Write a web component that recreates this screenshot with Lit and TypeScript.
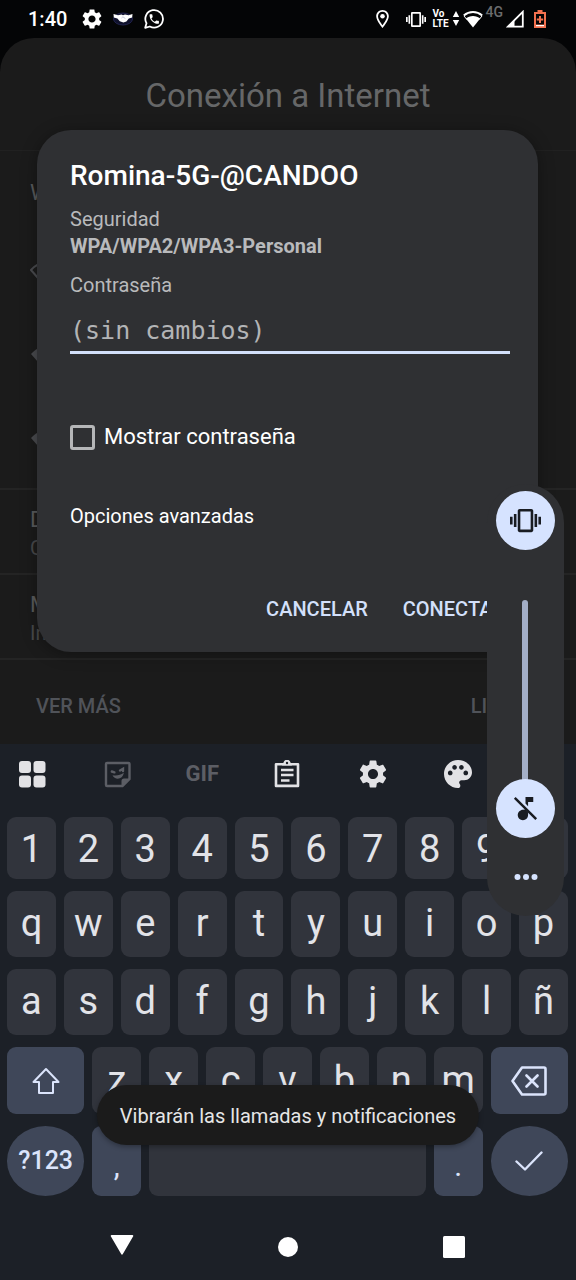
import { LitElement, html, css, svg } from "lit";
import { customElement, state } from "lit/decorators.js";
import { classMap } from "lit/directives/class-map.js";

const GEAR =
  "M19.14 12.94c.04-.3.06-.61.06-.94 0-.32-.02-.64-.07-.94l2.03-1.58c.18-.14.23-.41.12-.61l-1.92-3.32c-.12-.22-.37-.29-.59-.22l-2.39.96c-.5-.38-1.03-.7-1.62-.94l-.36-2.54c-.04-.24-.24-.41-.48-.41h-3.84c-.24 0-.43.17-.47.41l-.36 2.54c-.59.24-1.13.57-1.62.94l-2.39-.96c-.22-.08-.47 0-.59.22L2.74 8.87c-.12.21-.08.47.12.61l2.03 1.58c-.05.3-.09.63-.09.94s.02.64.07.94l-2.03 1.58c-.18.14-.23.41-.12.61l1.92 3.32c.12.22.37.29.59.22l2.39-.96c.5.38 1.03.7 1.62.94l.36 2.54c.05.24.24.41.48.41h3.84c.24 0 .44-.17.47-.41l.36-2.54c.59-.24 1.13-.56 1.62-.94l2.39.96c.22.08.47 0 .59-.22l1.92-3.32c.12-.22.07-.47-.12-.61l-2.01-1.58zM12 15.6c-1.98 0-3.6-1.62-3.6-3.6s1.62-3.6 3.6-3.6 3.6 1.62 3.6 3.6-1.62 3.6-3.6 3.6z";
const VIBRATE =
  "M0 15h2V9H0v6zm3 2h2V7H3v10zm19-8v6h2V9h-2zm-3 8h2V7h-2v10zM16.5 3h-9C6.67 3 6 3.67 6 4.5v15c0 .83.67 1.5 1.5 1.5h9c.83 0 1.5-.67 1.5-1.5v-15c0-.83-.67-1.5-1.5-1.5zM16 19H8V5h8v14z";
const CALL =
  "M6.62 10.79c1.44 2.83 3.76 5.14 6.59 6.59l2.2-2.2c.27-.27.67-.36 1.02-.24 1.12.37 2.33.57 3.57.57.55 0 1 .45 1 1V20c0 .55-.45 1-1 1-9.39 0-17-7.61-17-17 0-.55.45-1 1-1h3.5c.55 0 1 .45 1 1 0 1.25.2 2.45.57 3.57.11.35.03.74-.25 1.02l-2.2 2.2z";

const icon = (box: string, w: number, h: number, body: unknown) =>
  html`<svg viewBox=${box} width=${w} height=${h} fill="currentColor" aria-hidden="true">${body}</svg>`;

const stroke = (box: string, w: number, h: number, width: number, d: string) =>
  icon(box, w, h, svg`<path d=${d} fill="none" stroke="currentColor" stroke-width=${width} stroke-linejoin="round" stroke-linecap="round"/>`);

const reset = css`
  * { box-sizing: border-box; }
  svg { display: block; flex: none; }
  button {
    margin: 0; padding: 0; border: 0; background: none;
    font: inherit; color: inherit; cursor: pointer;
  }
`;

@customElement("status-bar")
class StatusBar extends LitElement {
  static styles = [reset, css`
    :host {
      display: flex; align-items: center; justify-content: space-between;
      height: 38px; padding: 0 30px 0 28px; color: #fff; background: #040506;
    }
    .group { display: flex; align-items: center; height: 38px; }
    .left { gap: 11px; }
    .right { gap: 3px; }
    .time { font-size: 20px; font-weight: 500; line-height: 24px; margin-right: 4px; }
    .spaced { margin-right: 14px; }
    .near { margin-right: 4px; }
    .volte { font-size: 10px; line-height: 10px; font-weight: 700; width: 16px; }
    .volte span { display: block; }
    .net { font-size: 14px; line-height: 16px; color: #6b6c6d; font-weight: 500; align-self: flex-start; padding-top: 4px; }
    .signal { margin-right: 7px; }
    .battery { color: #f3714f; }
  `];
  render() {
    return html`
      <div class="group left">
        <span class="time">1:40</span>
        ${icon("2 2 20 20", 20, 20, svg`<path d=${GEAR}/>`)}
        ${icon("0 0 20 20", 20, 20, svg`
          <ellipse cx="10" cy="10" rx="9.5" ry="6" fill="#10122c" stroke="#272a5c" stroke-width=".8"/>
          <path d="M.5 5 5 6.2 8.500 5.400 10 6.200 12 5.400 15.500 6.200 19.500 5 19.200 8.600 15.800 9.600 13.400 12.400 10.400 13.600 6.800 12.200 4.400 9.600.800 8.600Z"/>
          <path d="M8.500 9l1.400-1.200 2.500 1.800" fill="none" stroke="#a9abc6" stroke-width=".7"/>`)}
        ${icon("0 0 20 20", 20, 20, svg`
          <path d="M1.200 18.800 2.500 14.200A8.800 8.800 0 1 1 5.800 17.500Z" fill="none" stroke="currentColor" stroke-width="1.800" stroke-linejoin="round"/>
          <path d=${CALL} transform="translate(4 3.800) scale(.52)"/>`)}
      </div>
      <div class="group right">
        <span class="spaced">${icon("5 2 14 20", 13, 18, svg`
          <path d="M12 2C8.13 2 5 5.13 5 9c0 5.25 7 13 7 13s7-7.75 7-13c0-3.87-3.13-7-7-7zM7 9c0-2.76 2.24-5 5-5s5 2.24 5 5c0 2.88-2.88 7.19-5 9.88C9.92 16.21 7 11.85 7 9z"/>
          <circle cx="12" cy="9" r="2.5"/>`)}</span>
        <span class="near">${icon("0 2 24 20", 20, 17, svg`<path d=${VIBRATE}/>`)}</span>
        <span class="volte"><span>Vo</span><span>LTE</span></span>
        ${icon("0 0 8 16", 8, 16, svg`<path d="M4 0 7.2 6H.8ZM4 15 .8 9H7.2Z"/>`)}
        ${icon("0 0 20 18", 20, 18, svg`
          <path d="M10 17.500 2.800 8.600C4.800 7 7.200 6.100 10 6.100s5.200.900 7.200 2.500Z"/>
          <path d="M.8 5.600C3.400 3.400 6.500 2.100 10 2.100s6.600 1.300 9.200 3.500" fill="none" stroke="currentColor" stroke-width="2"/>
          <path d="M1 6 4 9.700M19 6 16 9.700" fill="none" stroke="currentColor" stroke-width="1"/>`)}
        <span class="net">4G</span>
        <span class="signal">${icon("0 0 18 18", 18, 18, svg`
          <path d="M16.800 1.800V16.600H2Z" fill="none" stroke="currentColor" stroke-width="1.800"/>
          <path d="M8.500 10V16.600H1.800Z"/>`)}</span>
        <span class="battery">${icon("0 0 12 18", 12, 18, svg`
          <path d="M3.500 0h5v2H12v16H0V2h3.500ZM2 4v10.500h8V4ZM5 6h2v2.500h2.200v2H7V13H5v-2.500H2.800v-2H5Z" fill-rule="evenodd"/>
          <path d="M2 15h8v1.200H2Z" fill="#fff"/>`)}</span>
      </div>`;
  }
}

@customElement("internet-panel")
class InternetPanel extends LitElement {
  static styles = [reset, css`
    :host {
      display: flex; flex-direction: column; flex: 1;
      background: #1b1b1b; border-radius: 34px 34px 0 0; color: #5a5b5d;
    }
    h1 {
      margin: 0; padding: 38px 0 34px; text-align: center; color: #666768;
      font-size: 33px; line-height: 40px; font-weight: 400;
      border-bottom: 1px solid #212121;
    }
    .networks { padding: 7px 30px 8px; border-bottom: 2px solid #242424; }
    h2 { margin: 0; font-size: 22px; line-height: 28px; font-weight: 400; }
    .networks h2 { line-height: 70px; }
    .network { display: flex; height: 84px; align-items: center; padding-top: 8px; color: #4a4b4f; }
    .item { padding: 16px 30px 11px; border-bottom: 2px solid #242424; }
    .item p { margin: 0; font-size: 20px; line-height: 28px; color: #48494b; }
    .actions {
      display: flex; justify-content: space-between; align-items: center;
      flex: 1; padding: 7px 51px 0 36px; color: #505359;
      font-size: 20px; line-height: 28px; font-weight: 500;
    }
  `];
  render() {
    const fan = "M1 10C5 5.500 9.500 3 15 3s10 2.500 14 7L15 26Z";
    return html`
      <h1>Conexión a Internet</h1>
      <section class="networks">
        <h2>W</h2>
        <div class="network">${stroke("0 0 30 28", 30, 28, 2, fan)}</div>
        <div class="network">${icon("0 0 30 28", 30, 28, svg`<path d=${fan}/>`)}</div>
        <div class="network">${icon("0 0 30 28", 30, 28, svg`<path d=${fan}/>`)}</div>
      </section>
      <section class="item"><h2>D</h2><p>C</p></section>
      <section class="item"><h2>M</h2><p>In</p></section>
      <div class="actions"><button>VER MÁS</button><button>LISTO</button></div>`;
  }
}

@customElement("wifi-dialog")
class WifiDialog extends LitElement {
  @state() private shown = false;

  static styles = [reset, css`
    :host {
      display: flex; flex-direction: column; align-items: stretch;
      padding: 30px 28px 19px 33px; border-radius: 34px;
      background: #2f3033; color: #b9babc;
      box-shadow: 0 2px 16px rgba(0, 0, 0, 0.35);
      font-size: 20px; line-height: 27px;
    }
    h2 { margin: 0 0 14px; color: #fff; font-size: 28px; line-height: 32px; font-weight: 500; }
    .value { font-weight: 700; margin-bottom: 12px; }
    .password {
      width: 100%; height: 44px; margin: 11px 0 67px; padding: 0; border: 0; border-radius: 0;
      border-bottom: 3px solid #d3e0fb; outline: 0; background: none; color: #fff;
      font: 25px/40px "DejaVu Sans Mono", monospace;
    }
    .password::placeholder { color: #b3b4b6; opacity: 1; }
    .show { display: flex; align-items: center; gap: 9px; color: #fff; font-size: 22px; line-height: 32px; }
    .show input {
      appearance: none; width: 25px; height: 25px; margin: 0;
      border: 3px solid #b5b6b8; border-radius: 3px;
    }
    .show input:checked { background: #d3e0fb; }
    .advanced { align-self: flex-start; margin: 49px 0 55px; color: #fff; line-height: 28px; }
    .actions {
      display: flex; justify-content: flex-end; gap: 35px; padding-right: 5px;
      color: #d3e0fb; font-weight: 500; line-height: 48px;
    }
  `];
  render() {
    return html`
      <h2>Romina-5G-@CANDOO</h2>
      <div>Seguridad</div>
      <div class="value">WPA/WPA2/WPA3-Personal</div>
      <label for="password">Contraseña</label>
      <input id="password" class="password" type=${this.shown ? "text" : "password"} placeholder="(sin cambios)">
      <label class="show">
        <input type="checkbox" .checked=${this.shown} @change=${() => (this.shown = !this.shown)}>
        Mostrar contraseña
      </label>
      <button class="advanced">Opciones avanzadas</button>
      <div class="actions"><button>CANCELAR</button><button>CONECTAR</button></div>`;
  }
}

@customElement("volume-panel")
class VolumePanel extends LitElement {
  static styles = [reset, css`
    :host {
      display: flex; flex-direction: column; align-items: center;
      width: 77px; padding-top: 7px; border-radius: 39px; background: #2f3033; color: #d6e3ff;
    }
    .ringer {
      display: grid; place-items: center; width: 59px; height: 59px; margin-bottom: 50px;
      border-radius: 50%; background: #d6e3ff; color: #191c22;
    }
    .slider { position: relative; width: 59px; height: 238px; }
    .slider::before {
      content: ""; position: absolute; inset: 0 27px 30px 26px;
      border-radius: 3px; background: #a3aec7;
    }
    .slider input {
      appearance: none; position: relative; display: block; width: 59px; height: 238px; margin: 0;
      writing-mode: vertical-lr; direction: rtl; background: none;
    }
    .slider input::-webkit-slider-runnable-track { width: 59px; background: none; }
    .slider input::-webkit-slider-thumb {
      appearance: none; width: 59px; height: 59px; border-radius: 50%; background: #d6e3ff;
    }
    .muted { position: absolute; left: 14px; bottom: 14px; color: #191c22; pointer-events: none; }
    .more { padding: 0 12px; height: 78px; }
  `];
  render() {
    return html`
      <button class="ringer" aria-label="Vibrar">${icon("0 0 24 24", 31, 31, svg`<path d=${VIBRATE}/>`)}</button>
      <div class="slider">
        <input type="range" min="0" max="15" value="0" aria-label="Volumen">
        <span class="muted">${icon("0 0 24 24", 31, 31, svg`
          <path d="M10 13C8 13 6 14.800 6 17s1.800 4 4 4 4-1.800 4-4v-2l-2-2.200ZM14 7h4V3h-6v5.180l2 2z"/>
          <path d="M3.700 3.700 20.300 20.300" stroke="currentColor" stroke-width="1.900"/>`)}</span>
      </div>
      <button class="more" aria-label="Más">${icon("0 0 24 6", 24, 6, svg`<circle cx="3.500" cy="3" r="3"/><circle cx="12" cy="3" r="3"/><circle cx="20.500" cy="3" r="3"/>`)}</button>`;
  }
}

@customElement("soft-keyboard")
class SoftKeyboard extends LitElement {
  static styles = [reset, css`
    :host { display: block; background: #1c2027; color: #e2e3e8; }
    .tools {
      display: flex; justify-content: space-between; align-items: center;
      height: 73px; padding: 0 19px 13px 18px;
    }
    .tool { display: grid; place-items: center; width: 28px; height: 40px; color: #e2e2e5; }
    .dim { color: #5c5e65; }
    .gif { width: 34px; margin: 0 -3px; font-size: 22px; line-height: 24px; font-weight: 700; }
    .rows { display: flex; flex-direction: column; gap: 12px; padding: 0 8px 0 7px; }
    .row { display: flex; gap: 8px; height: 66px; }
    .digits { height: 62px; }
    .tall { height: 67px; }
    .bottom { height: 70px; }
    .key {
      flex: 0 0 calc((100% - 72px) / 10); display: flex; align-items: center; justify-content: center;
      border-radius: 9px; background: #31343c; font-size: 38px; line-height: 44px; padding-bottom: 2px;
    }
    .digits .key { padding: 2px 0 0; }
    .row .wide { flex: 1 1 0; background: #3f4759; color: #dbe4fb; padding-bottom: 0; }
    .row .round { border-radius: 50%; font-size: 25px; line-height: 32px; font-weight: 500; white-space: nowrap; }
    .row .space { flex-basis: calc((100% - 72px) / 2 + 32px); }
    .punct { background: #3f4759; color: #dbe4fb; font-size: 30px; padding: 10px 0 0; }
    .nav { display: grid; grid-template-columns: repeat(3, 1fr); padding: 17px 39px 0; height: 84px; color: #fff; }
    .nav button { display: grid; place-items: center; }
  `];
  private keys(chars: string) {
    return [...chars].map((c) => html`<button class="key">${c}</button>`);
  }
  private tool(label: string, body: unknown, dim = false) {
    return html`<button class=${classMap({ tool: true, dim })} aria-label=${label}>${body}</button>`;
  }
  render() {
    return html`
      <div class="tools">
        ${this.tool("Menú", icon("0 0 28 28", 28, 28, svg`
          <rect x="1" y="1" width="12" height="12" rx="3"/><rect x="15.500" y="1" width="12" height="12" rx="3"/>
          <rect x="1" y="15.500" width="12" height="12" rx="3"/><rect x="15.500" y="15.500" width="12" height="12" rx="3"/>`))}
        ${this.tool("Stickers", icon("0 0 28 28", 28, 28, svg`
          <path d="M4 3H25.500A1 1 0 0 1 26.500 4V19L19.500 26H4A1 1 0 0 1 3 25V4A1 1 0 0 1 4 3Z" fill="none" stroke="currentColor" stroke-width="2.400"/>
          <path d="M18.500 26.500V21a2.500 2.500 0 0 1 2.500-2.500H27ZM9.500 15.200c4 .800 8 0 11.300-2.400-.500 3.900-3.300 5.900-6 5.900-2.300 0-4.300-1.400-5.300-3.500Z"/>
          <path d="M8.800 11.500l2.600.800M17 10.500l3-1.700v2.200" fill="none" stroke="currentColor" stroke-width="2.400" stroke-linecap="round"/>`), true)}
        <button class="tool dim gif">GIF</button>
        ${this.tool("Portapapeles", icon("0 0 28 28", 28, 28, svg`
          <path d="M3 4.200H25V25.900H3Z" fill="none" stroke="currentColor" stroke-width="2.600" stroke-linejoin="round"/>
          <path d="M9 5.500 10.500 2.500A3.600 3.600 0 0 1 17.500 2.500L19 5.500Z"/>
          <circle cx="14" cy="3" r="1.200" fill="#1c2027"/>
          <path d="M8 10H20.500M8 15H20.500M8 20.500H16.500" fill="none" stroke="currentColor" stroke-width="2.600"/>`))}
        ${this.tool("Ajustes", icon("2 2 20 20", 28, 28, svg`<path d=${GEAR}/>`))}
        ${this.tool("Temas", icon("3 3 18 18", 28, 28, svg`
          <path d="M12 3c-4.970 0-9 4.030-9 9s4.030 9 9 9c.830 0 1.500-.670 1.500-1.500 0-.390-.150-.740-.390-1.010-.230-.260-.380-.610-.380-.990 0-.830.670-1.500 1.500-1.500H16c2.760 0 5-2.240 5-5 0-4.420-4.030-8-9-8zm-5 9.800c-.830 0-1.500-.670-1.500-1.500S6.170 9.800 7 9.800s1.500.670 1.500 1.500-.670 1.500-1.500 1.500zm2.800-3.600c-.830 0-1.500-.670-1.500-1.500S8.970 6.200 9.800 6.200s1.500.670 1.500 1.500-.670 1.500-1.500 1.500zm4.400 0c-.830 0-1.500-.670-1.500-1.500s.670-1.500 1.500-1.500 1.500.670 1.500 1.500-.670 1.500-1.500 1.500zm2.800 3.600c-.830 0-1.500-.670-1.500-1.500s.670-1.500 1.500-1.500 1.500.670 1.500 1.500-.670 1.500-1.500 1.500z"/>`))}
        <span class="tool"></span>
      </div>
      <div class="rows">
        <div class="row digits">${this.keys("1234567890")}</div>
        <div class="row">${this.keys("qwertyuiop")}</div>
        <div class="row">${this.keys("asdfghjklñ")}</div>
        <div class="row tall">
          <button class="key wide" aria-label="Mayúsculas">${stroke("0 0 28 28", 28, 28, 2, "M14 2 26.500 15H21V26H7V15H1.500Z")}</button>
          ${this.keys("zxcvbnm")}
          <button class="key wide" aria-label="Borrar">${stroke("0 0 36 30", 36, 30, 2.6, "M11 1.500H33A1.500 1.500 0 0 1 34.500 3V27A1.500 1.500 0 0 1 33 28.500H11L1.500 15ZM15.500 9.500 26.500 20.500M26.500 9.500 15.500 20.500")}</button>
        </div>
        <div class="row bottom">
          <button class="key wide round">?123</button>
          <button class="key punct">,</button>
          <button class="key space" aria-label="Espacio"></button>
          <button class="key punct">.</button>
          <button class="key wide round" aria-label="Aceptar">${stroke("0 0 28 20", 28, 20, 2.4, "M1.500 10.500 10 18.500 26.500 1.500")}</button>
        </div>
      </div>
      <div class="nav">
        <button aria-label="Atrás">${icon("0 0 24 26", 24, 26, svg`<path d="M1.500 1H22.500a.800.800 0 0 1 .700 1.200L12.700 20.300a.800.800 0 0 1-1.400 0L.800 2.200A.800.800 0 0 1 1.500 1Z"/>`)}</button>
        <button aria-label="Inicio">${icon("0 0 20 20", 20, 20, svg`<circle cx="10" cy="10" r="10"/>`)}</button>
        <button aria-label="Recientes">${icon("0 0 22 22", 22, 22, svg`<rect width="22" height="22" rx="1.500"/>`)}</button>
      </div>`;
  }
}

@customElement("app-root")
class AppRoot extends LitElement {
  static styles = [reset, css`
    :host {
      position: relative; display: flex; flex-direction: column; min-height: 100vh;
      overflow: hidden; background: #040506; font-family: Roboto, sans-serif;
    }
    .dialog { position: absolute; top: 130px; left: 37px; right: 38px; }
    .volume { position: absolute; top: 484px; right: 12px; }
    .toast {
      position: absolute; left: 50%; bottom: 135px; transform: translateX(-50%);
      padding: 17px 23px 15px; border-radius: 30px; background: #1b1b1b; color: #e6e6e6;
      font-size: 20px; line-height: 28px; white-space: nowrap;
      box-shadow: 0 2px 5px rgba(0, 0, 0, 0.3);
    }
  `];
  render() {
    return html`
      <status-bar></status-bar>
      <internet-panel></internet-panel>
      <soft-keyboard></soft-keyboard>
      <wifi-dialog class="dialog" role="dialog"></wifi-dialog>
      <volume-panel class="volume"></volume-panel>
      <div class="toast" role="status">Vibrarán las llamadas y notificaciones</div>`;
  }
}
